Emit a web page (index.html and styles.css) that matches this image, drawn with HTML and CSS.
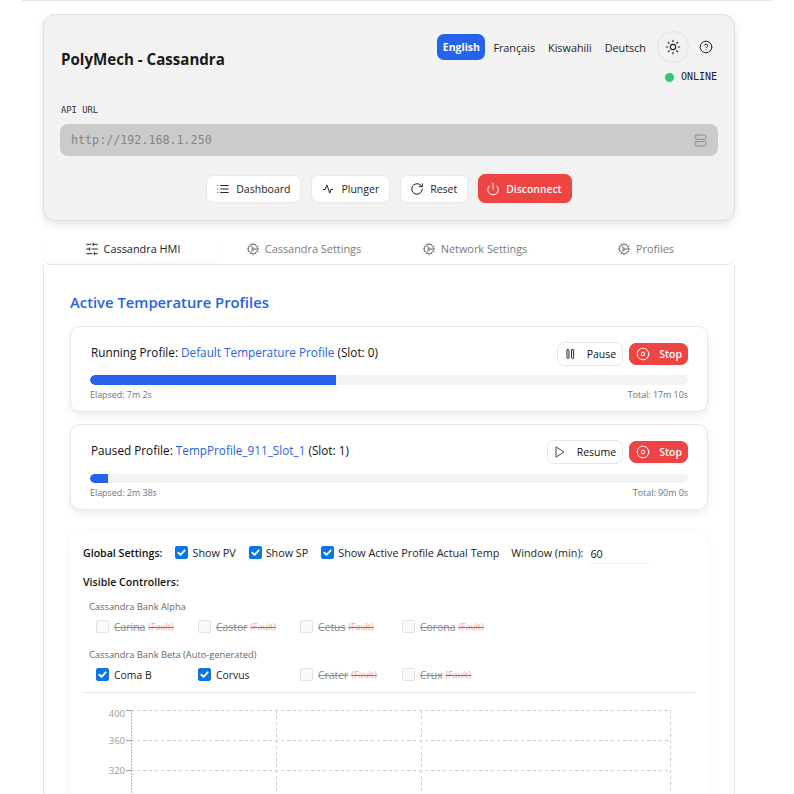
FILE: index.html
```html
<!DOCTYPE html>
<html lang="en">
<head>
<meta charset="utf-8">
<title>PolyMech - Cassandra</title>
<link rel="stylesheet" href="styles.css">
</head>
<body>
<div class="page">
  <header class="header-card">
    <div class="header-top">
      <h1 class="title">PolyMech - Cassandra</h1>
      <div class="header-right">
        <div class="lang-row">
          <button class="lang active">English</button>
          <button class="lang">Français</button>
          <button class="lang">Kiswahili</button>
          <button class="lang">Deutsch</button>
          <button class="theme">
            <svg class="ic16" viewBox="0 0 24 24"><circle cx="12" cy="12" r="4"/><path d="M12 2v2M12 20v2M4.93 4.93l1.41 1.41M17.66 17.66l1.41 1.41M2 12h2M20 12h2M6.34 17.66l-1.41 1.41M19.07 4.93l-1.41 1.41"/></svg>
          </button>
          <button class="help">
            <svg class="ic14" viewBox="0 0 24 24"><circle cx="12" cy="12" r="10"/><path d="M9.09 9a3 3 0 0 1 5.83 1c0 2-3 3-3 3M12 17h.01"/></svg>
          </button>
        </div>
        <div class="status"><span class="dot"></span><span>ONLINE</span></div>
      </div>
    </div>
    <label class="api-label">API URL</label>
    <div class="api-field">
      <span>http://192.168.1.250</span>
      <svg class="server" viewBox="0 0 24 24"><rect x="2" y="2" width="20" height="8" rx="2"/><rect x="2" y="14" width="20" height="8" rx="2"/><path d="M6 6h.01M6 18h.01"/></svg>
    </div>
    <div class="actions">
      <button class="btn"><svg class="ic14" viewBox="0 0 24 24"><path d="M8 6h13M8 12h13M8 18h13M3 6h.01M3 12h.01M3 18h.01"/></svg>Dashboard</button>
      <button class="btn"><svg class="ic14" viewBox="0 0 24 24"><path d="M20 13h-3l-2 6L10 5l-3 8H4"/></svg>Plunger</button>
      <button class="btn"><svg class="ic14" viewBox="0 0 24 24"><path d="M21 12a9 9 0 1 1-9-9c2.52 0 4.93 1 6.74 2.74L21 8"/><path d="M21 3v5h-5"/></svg>Reset</button>
      <button class="btn danger"><svg class="ic14" viewBox="0 0 24 24"><path d="M12 2v10"/><path d="M18.400 6.600a9 9 0 1 1-12.770.04"/></svg>Disconnect</button>
    </div>
  </header>

  <nav class="tabs">
    <div class="tab active"><svg class="ic14" viewBox="0 0 24 24"><path d="M21 4h-7M10 4H3M21 12h-9M8 12H3M21 20h-5M12 20H3M14 2v4M8 10v4M16 18v4"/></svg>Cassandra HMI</div>
    <div class="tab"><svg class="ic14" viewBox="0 0 24 24"><path d="M12 20a8 8 0 1 0 0-16 8 8 0 0 0 0 16Z"/><path d="M12 14a2 2 0 1 0 0-4 2 2 0 0 0 0 4Z"/><path d="M12 2v2M12 22v-2M17 20.660l-1-1.730M11 10.270 7 3.340M20.660 17l-1.730-1M3.340 7l1.730 1M14 12h8M2 12h2M20.660 7l-1.730 1M3.340 17l1.730-1M17 3.340l-1 1.730M11 13.730l-4 6.930"/></svg>Cassandra Settings</div>
    <div class="tab"><svg class="ic14" viewBox="0 0 24 24"><path d="M12 20a8 8 0 1 0 0-16 8 8 0 0 0 0 16Z"/><path d="M12 14a2 2 0 1 0 0-4 2 2 0 0 0 0 4Z"/><path d="M12 2v2M12 22v-2M17 20.660l-1-1.730M11 10.270 7 3.340M20.660 17l-1.730-1M3.340 7l1.730 1M14 12h8M2 12h2M20.660 7l-1.730 1M3.340 17l1.730-1M17 3.340l-1 1.730M11 13.730l-4 6.930"/></svg>Network Settings</div>
    <div class="tab"><svg class="ic14" viewBox="0 0 24 24"><path d="M12 20a8 8 0 1 0 0-16 8 8 0 0 0 0 16Z"/><path d="M12 14a2 2 0 1 0 0-4 2 2 0 0 0 0 4Z"/><path d="M12 2v2M12 22v-2M17 20.660l-1-1.730M11 10.270 7 3.340M20.660 17l-1.730-1M3.340 7l1.730 1M14 12h8M2 12h2M20.660 7l-1.730 1M3.340 17l1.730-1M17 3.340l-1 1.730M11 13.730l-4 6.930"/></svg>Profiles</div>
  </nav>

  <main class="panel">
    <h2 class="section-title">Active Temperature Profiles</h2>

    <section class="profile">
      <div class="profile-head">
        <div class="profile-name">Running Profile: <span class="link">Default Temperature Profile</span> (Slot: 0)</div>
        <div class="profile-btns">
          <button class="pbtn"><svg class="ic14 pause" viewBox="0 0 24 24"><rect x="5" y="4.500" width="3.500" height="15" rx="1"/><rect x="13" y="4.500" width="3.500" height="15" rx="1"/></svg>Pause</button>
          <button class="pbtn stop"><svg class="ic14" viewBox="0 0 24 24"><circle cx="12" cy="12" r="10"/><rect x="9" y="9" width="6" height="6" rx="3"/></svg>Stop</button>
        </div>
      </div>
      <div class="track"><div class="fill" style="width:41.1%"></div></div>
      <div class="times"><span>Elapsed: 7m 2s</span><span>Total: 17m 10s</span></div>
    </section>

    <section class="profile">
      <div class="profile-head">
        <div class="profile-name">Paused Profile: <span class="link">TempProfile_911_Slot_1</span> (Slot: 1)</div>
        <div class="profile-btns">
          <button class="pbtn"><svg class="ic14 play" viewBox="0 0 24 24"><path d="M4 3.500 17 12 4 20.500z"/></svg>Resume</button>
          <button class="pbtn stop"><svg class="ic14" viewBox="0 0 24 24"><circle cx="12" cy="12" r="10"/><rect x="9" y="9" width="6" height="6" rx="3"/></svg>Stop</button>
        </div>
      </div>
      <div class="track"><div class="fill" style="width:3%"></div></div>
      <div class="times"><span>Elapsed: 2m 38s</span><span>Total: 90m 0s</span></div>
    </section>

    <section class="chart-card">
      <div class="settings-row">
        <span class="strong">Global Settings:</span>
        <label class="chk"><span class="box on"><svg viewBox="0 0 12 12"><path d="M2.500 6.200l2.400 2.400 4.600-5"/></svg></span>Show PV</label>
        <label class="chk"><span class="box on"><svg viewBox="0 0 12 12"><path d="M2.500 6.200l2.400 2.400 4.600-5"/></svg></span>Show SP</label>
        <label class="chk"><span class="box on"><svg viewBox="0 0 12 12"><path d="M2.500 6.200l2.400 2.400 4.600-5"/></svg></span>Show Active Profile Actual Temp</label>
        <span class="window">Window (min):<span class="win-input">60</span></span>
      </div>
      <div class="strong visible">Visible Controllers:</div>
      <div class="bank-name">Cassandra Bank Alpha</div>
      <div class="ctrl-grid">
        <label class="ctrl fault"><span class="box"></span><span class="nm">Carina</span> <span class="ft">(Fault)</span></label>
        <label class="ctrl fault"><span class="box"></span><span class="nm">Castor</span> <span class="ft">(Fault)</span></label>
        <label class="ctrl fault"><span class="box"></span><span class="nm">Cetus</span> <span class="ft">(Fault)</span></label>
        <label class="ctrl fault"><span class="box"></span><span class="nm">Corona</span> <span class="ft">(Fault)</span></label>
      </div>
      <div class="bank-name beta">Cassandra Bank Beta (Auto-generated)</div>
      <div class="ctrl-grid">
        <label class="ctrl"><span class="box on"><svg viewBox="0 0 12 12"><path d="M2.500 6.200l2.400 2.400 4.600-5"/></svg></span><span>Coma B</span></label>
        <label class="ctrl"><span class="box on"><svg viewBox="0 0 12 12"><path d="M2.500 6.200l2.400 2.400 4.600-5"/></svg></span><span>Corvus</span></label>
        <label class="ctrl fault"><span class="box"></span><span class="nm">Crater</span> <span class="ft">(Fault)</span></label>
        <label class="ctrl fault"><span class="box"></span><span class="nm">Crux</span> <span class="ft">(Fault)</span></label>
      </div>
      <div class="chart-wrap">
        <svg class="chart" width="612" height="120" viewBox="0 0 612 120">
          <g class="grid">
            <path d="M48 17.500H588M48 47.500H588M48 77.500H588M48 107.500H588"/>
            <path d="M193.500 17V120M338.500 17V120M587.500 17V120"/>
          </g>
          <path class="axis" d="M48.500 17V120"/>
          <path class="tick" d="M43 17.500H48M43 47.500H48M43 77.500H48"/>
          <g class="ylab">
            <text x="42" y="24">400</text>
            <text x="42" y="51">360</text>
            <text x="42" y="81">320</text>
          </g>
        </svg>
      </div>
    </section>
  </main>
</div>
</body>
</html>
```
FILE: styles.css
```css
* { box-sizing: border-box; }
html, body { margin: 0; height: 794px; overflow: hidden; background: #fff; }
body { font-family: "Open Sans", "Noto Sans", sans-serif; color: #111; font-size: 11px; }
button { font: inherit; cursor: pointer; }
svg { fill: none; stroke: currentColor; stroke-width: 1.700; stroke-linecap: round; stroke-linejoin: round; flex: none; }
.ic14 { width: 14px; height: 14px; }
.ic16 { width: 16px; height: 16px; }

.page { margin-left: 22px; width: 750px; height: 794px; overflow: hidden; border-top: 1px solid #e5e5e5; padding: 13px 37px 0 21px; }

.header-card { height: 207px; background: #f2f2f2; border: 1px solid #dedede; border-radius: 12px; box-shadow: 0 4px 8px rgba(0,0,0,.1); padding: 19px 16px 0; }
.header-top { display: flex; justify-content: space-between; height: 65px; }
.title { margin: 15px 0 0 1px; font-size: 15.100px; font-weight: 700; color: #1a1a1a; line-height: 20px; }
.header-right { display: flex; flex-direction: column; align-items: flex-end; }
.lang-row { display: flex; align-items: center; height: 26px; }
.lang { border: 0; background: none; height: 26px; padding: 0 8px; border-radius: 7px; font-size: 10.800px; color: #222; font-weight: 500; margin-right: -3px; }
.lang.active { width: 48px; padding: 0; background: #2563eb; color: #fff; font-weight: 700; margin-right: 0; font-size: 10.500px; }
.theme { width: 32px; height: 32px; border-radius: 50%; border: 1px solid #e2e2e2; background: none; display: flex; align-items: center; justify-content: center; margin-left: 6px; padding: 0; color: #222; }
.help { width: 14px; height: 14px; border: 0; background: none; padding: 0; margin: 0 5px 0 10px; color: #222; display: flex; }
.status { display: flex; align-items: center; gap: 7px; margin: 9px 1px 0 0; font-family: "DejaVu Sans Mono", monospace; font-size: 10px; color: #222; line-height: 16px; }
.dot { width: 9px; height: 9px; border-radius: 50%; background: #35c768; }

.api-label { display: block; margin: 5px 0 0 1px; font-family: "DejaVu Sans Mono", monospace; font-size: 8.800px; color: #333; line-height: 12px; }
.api-field { margin-top: 8px; height: 32px; background: #cbcbcb; border-radius: 8px; padding: 0 11px 0 11px; display: flex; align-items: center; justify-content: space-between; font-family: "DejaVu Sans Mono", monospace; font-size: 11.700px; color: #858585; }
.server { width: 13px; height: 13px; color: #808080; stroke-width: 1.500; }
.actions { display: flex; justify-content: center; align-items: center; gap: 10px; margin-top: 18px; height: 29px; }
.btn { height: 28px; display: flex; align-items: center; gap: 6px; padding: 0 10px 0 9px; background: #fff; border: 1px solid #e8e8e8; border-radius: 7px; font-size: 10.500px; font-weight: 500; color: #222; }
.btn.danger { height: 29px; background: #ef4444; border-color: #ef4444; color: #fff; font-weight: 600; font-size: 10.400px; padding: 0 9px 0 7px; }

.tabs { display: grid; grid-template-columns: repeat(4, 1fr); margin-top: 14px; height: 30px; border-bottom: 1px solid #e5e5e5; border-radius: 0 0 8px 8px; padding: 0 4px 2px; }
.tab { display: flex; align-items: center; justify-content: center; gap: 5px; font-size: 10.900px; font-weight: 500; color: #7a7a7a; border-radius: 8px; }
.tab.active { color: #222; box-shadow: 0 1px 2px rgba(0,0,0,.04); }
.panel { height: 560px; border: 1px solid #e5e5e5; border-top: 0; padding: 26px 26px 0; }
.section-title { margin: 0 0 13px; font-size: 14.800px; line-height: 22px; font-weight: 600; color: #2563eb; }

.profile { height: 86px; margin-bottom: 12.300px; border: 1px solid #e5e5e5; border-radius: 10px; box-shadow: 0 4px 8px rgba(0,0,0,.08); padding: 15px 19px 0; background: #fff; }
.profile-head { display: flex; justify-content: space-between; align-items: center; height: 24px; }
.profile-name { margin: 0 0 4px 1px; font-size: 11.750px; font-weight: 500; color: #111; }
.link { color: #2563eb; }
.profile-btns { display: flex; gap: 6px; align-items: center; }
.pbtn { height: 24px; display: flex; align-items: center; gap: 9px; padding: 0 6px; background: #fff; border: 1px solid #e5e5e5; border-radius: 7px; font-size: 10.500px; font-weight: 500; color: #111; }
.pbtn.stop { height: 22px; padding-right: 5px; background: #ef4444; border-color: #ef4444; color: #fff; font-weight: 600; }
.pause { color: #222; }
.play { color: #444; }
.track { margin-top: 9.400px; height: 9.500px; background: #f3f3f3; border-radius: 5px; overflow: hidden; }
.fill { height: 100%; background: #2563eb; border-radius: 5px 0 0 5px; }
.times { display: flex; justify-content: space-between; margin-top: 4px; font-size: 8.900px; line-height: 12px; color: #6b7280; }

.chart-card { margin-top: 21.700px; height: 400px; box-shadow: 0 2px 8px rgba(0,0,0,.06); border-radius: 10px; padding: 10px 13px 0; background: #fff; }
.settings-row { display: flex; align-items: center; height: 22px; font-size: 10.800px; font-weight: 500; color: #222; }
.strong { font-weight: 600; color: #111; font-size: 10.600px; }
.settings-row .strong { margin-right: 13px; }
.chk { display: flex; align-items: center; gap: 4px; margin-right: 13px; }
.box { width: 13px; height: 13px; border: 1px solid #e2e2e2; border-radius: 2px; background: #fafafa; display: flex; flex: none; }
.box.on { background: #0b75e8; border-color: #0b75e8; color: #fff; }
.box svg { width: 11px; height: 11px; stroke-width: 2; }
.window { display: flex; align-items: center; gap: 4px; margin-left: -1px; }
.win-input { width: 64px; height: 22px; margin-top: 1px; border-bottom: 1px solid #f0f0f0; border-radius: 6px; padding: 4px 3px 2px; color: #111; line-height: 16px; }
.visible { margin-top: 10px; line-height: 16px; }
.bank-name { margin: 10px 0 0 6px; font-size: 9.300px; font-weight: 500; color: #666; line-height: 14px; }
.bank-name.beta { margin-top: 14px; }
.ctrl-grid { display: grid; grid-template-columns: repeat(4, 102px); margin: 6px 0 0 13px; }
.ctrl { display: flex; align-items: center; gap: 5px; height: 14px; font-size: 10.400px; color: #222; white-space: nowrap; }
.ctrl .nm { color: #8a8a8a; text-decoration: line-through; }
.ctrl .ft { color: #f8a0a0; font-size: 8.800px; text-decoration: line-through; margin-left: -2px; text-decoration-color: #777; }
.chart-wrap { margin-top: 10px; border-top: 1px solid #e3e3e3; }
.chart { display: block; }
.grid path { stroke: #ccc; stroke-width: 1; stroke-dasharray: 3 3; stroke-linecap: butt; }
.axis { stroke: #b4b4b4; stroke-width: 1; stroke-dasharray: 2 1; stroke-linecap: butt; }
.tick { stroke: #999; stroke-width: 1; stroke-linecap: butt; }
.ylab text { fill: #999; stroke: none; font-size: 9.500px; text-anchor: end; font-family: "Open Sans", sans-serif; }
```
